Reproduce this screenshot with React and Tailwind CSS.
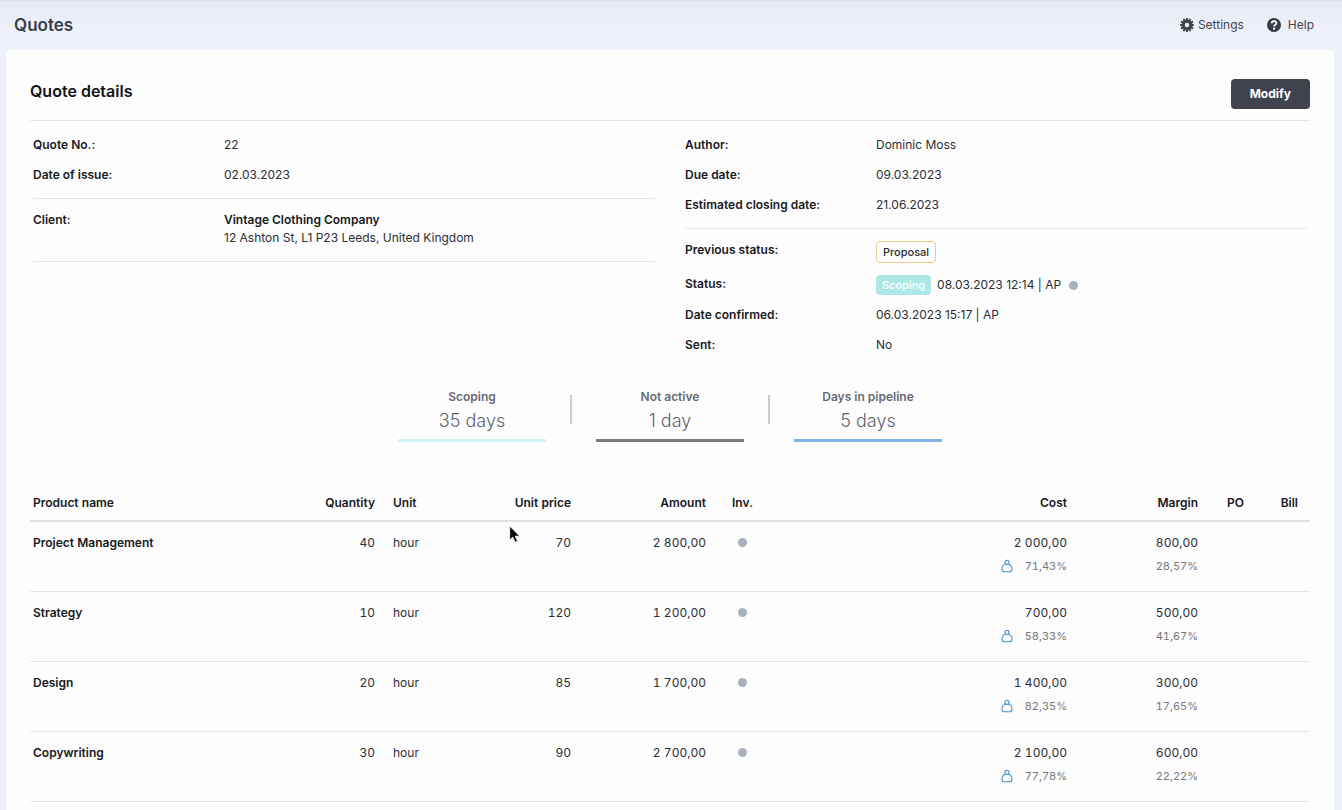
import React from "react";

const leftTop = [
  { label: "Quote No.:", value: "22" },
  { label: "Date of issue:", value: "02.03.2023" },
];

const rightTop = [
  { label: "Author:", value: "Dominic Moss" },
  { label: "Due date:", value: "09.03.2023" },
  { label: "Estimated closing date:", value: "21.06.2023" },
];

const stats = [
  { label: "Scoping", value: "35 days", line: "border-[#d2f3f3]" },
  { label: "Not active", value: "1 day", line: "border-[#7c7a80]" },
  { label: "Days in pipeline", value: "5 days", line: "border-[#80b2e6]" },
];

const products = [
  { name: "Project Management", qty: "40", price: "70", amount: "2 800,00", cost: "2 000,00", costPct: "71,43%", margin: "800,00", marginPct: "28,57%" },
  { name: "Strategy", qty: "10", price: "120", amount: "1 200,00", cost: "700,00", costPct: "58,33%", margin: "500,00", marginPct: "41,67%" },
  { name: "Design", qty: "20", price: "85", amount: "1 700,00", cost: "1 400,00", costPct: "82,35%", margin: "300,00", marginPct: "17,65%" },
  { name: "Copywriting", qty: "30", price: "90", amount: "2 700,00", cost: "2 100,00", costPct: "77,78%", margin: "600,00", marginPct: "22,22%" },
];

function GearIcon() {
  return (
    <svg viewBox="-12 -12 24 24" className="size-[14px]" aria-hidden="true">
      <g fill="#41454f">
        {[0, 30, 60, 90, 120, 150].map((a) => (
          <path key={a} d="M-2.2 -8 L-1.3 -12 H1.3 L2.2 -8 V8 L1.3 12 H-1.3 L-2.2 8 Z" transform={`rotate(${a})`} />
        ))}
        <circle r="8.8" />
      </g>
      <circle r="3.8" fill="#ecf0f8" />
    </svg>
  );
}

function HelpIcon() {
  return (
    <svg viewBox="0 0 14 14" className="size-[14px]" aria-hidden="true">
      <circle cx="7" cy="7" r="7" fill="#383c45" />
      <path d="M4.6 5.4C4.7 3.9 5.6 3.1 7 3.1s2.4.8 2.4 2.1c0 1.6-2.2 1.6-2.2 3.2" fill="none" stroke="#fff" strokeWidth="1.7" />
      <circle cx="7.1" cy="10.7" r="1.1" fill="#fff" />
    </svg>
  );
}

function PersonIcon() {
  return (
    <svg viewBox="0 0 12 14" className="h-[14px] w-[12px]" fill="none" stroke="#4793d0" strokeWidth="1.1" aria-hidden="true">
      <circle cx="6" cy="3.3" r="2.1" />
      <path d="M4.6 5.1C2.6 5.9 1 8.2 1 10.2c0 1.8 1.1 2.6 2.7 2.6h4.6c1.6 0 2.7-.8 2.7-2.6 0-2-1.6-4.3-3.6-5.1" />
    </svg>
  );
}

function Row({ label, children, className = "min-h-[30px] items-center" }) {
  return (
    <div className={`flex ${className}`}>
      <dt className="w-[191px] shrink-0 font-semibold text-[#17191e]">{label}</dt>
      <dd className="min-w-0 flex-1">{children}</dd>
    </div>
  );
}

function Dot() {
  return <span className="inline-block size-[9px] rounded-full bg-[#a9b0be]" />;
}

export default function App() {
  return (
    <div className="flex min-h-screen flex-col bg-[#ecf0f8] font-['Inter',sans-serif] text-xs leading-[18px] text-[#2b2e35]">
      <header className="flex h-[50px] items-center justify-between border-t border-[#dde0ea] bg-linear-to-b from-[#e7eaf3] to-[#edf0f8] to-50% pr-7 pb-px pl-[14px]">
        <h1 className="text-[17px] leading-6 font-semibold text-[#3a3e48]">Quotes</h1>
        <nav className="flex items-center gap-[23px] text-[#41454f]">
          <a href="#settings" className="flex items-center gap-1">
            <GearIcon />
            Settings
          </a>
          <a href="#help" className="flex items-center gap-[7px]">
            <HelpIcon />
            Help
          </a>
        </nav>
      </header>

      <main className="relative mr-2 ml-[6px] flex-1 rounded-t-[4px] bg-[#fdfdfd] px-6">
        <div className="flex h-[71px] items-center justify-between border-b border-[#e2e5ea] pt-3">
          <h2 className="text-base leading-6 font-semibold text-[#121419]">Quote details</h2>
          <button type="button" className="mt-[6px] h-[30px] rounded-[4px] bg-[#40434e] px-[19px] font-bold text-white">
            Modify
          </button>
        </div>

        <div className="grid grid-cols-2 gap-x-[30px] px-[3px] pt-[9px]">
          <div>
            <dl className="border-b border-[#e2e5ea] pb-2">
              {leftTop.map((r) => (
                <Row key={r.label} label={r.label}>{r.value}</Row>
              ))}
            </dl>
            <dl className="border-b border-[#e2e5ea] pt-3 pb-[14px]">
              <Row label="Client:" className="items-start">
                <div className="font-semibold text-[#17191e]">Vintage Clothing Company</div>
                <div>12 Ashton St, L1 P23 Leeds, United Kingdom</div>
              </Row>
            </dl>
          </div>
          <div>
            <dl className="border-b border-[#e2e5ea] pb-2">
              {rightTop.map((r) => (
                <Row key={r.label} label={r.label}>{r.value}</Row>
              ))}
            </dl>
            <dl className="pt-3">
              <Row label="Previous status:" className="h-[34px] items-start">
                <span className="inline-block rounded-[4px] border border-[#f2c48f] px-[6px] text-[11px] leading-5 font-medium text-[#2b2e35]">
                  Proposal
                </span>
              </Row>
              <Row label="Status:" className="h-[25px] items-start">
                <span className="flex items-center">
                  <span className="mr-[6px] rounded-[4px] bg-[#aee8e6] px-[6px] text-[11px] leading-5 font-medium text-white">Scoping</span>
                  <span>08.03.2023 12:14 | AP</span>
                  <span className="ml-2 flex"><Dot /></span>
                </span>
              </Row>
              <Row label="Date confirmed:">06.03.2023 15:17 | AP</Row>
              <Row label="Sent:">No</Row>
            </dl>
          </div>
        </div>

        <section className="mt-[27px] flex justify-center gap-6">
          {stats.map((s, i) => (
            <React.Fragment key={s.label}>
              {i > 0 && <div className="mt-2 h-[29px] w-[2px] bg-[#c9ccd5]" />}
              <div className={`w-[148px] border-b-3 pb-1 text-center ${s.line}`}>
                <div className="leading-5 font-semibold text-[#666a73]">{s.label}</div>
                <div className="text-lg leading-7 font-light text-[#5f626b]">{s.value}</div>
              </div>
            </React.Fragment>
          ))}
        </section>

        <table className="mt-[42px] w-full table-fixed border-collapse tabular-nums">
          <colgroup>
            <col className="w-[200px]" />
            <col className="w-[145px]" />
            <col className="w-[60px]" />
            <col className="w-[136px]" />
            <col className="w-[135px]" />
            <col className="w-[74px]" />
            <col />
            <col className="w-[131px]" />
            <col className="w-[58px]" />
            <col className="w-[54px]" />
          </colgroup>
          <thead>
            <tr className="h-[37px] border-b-2 border-[#dfe1e7] text-left text-[#17191e] *:pt-[2px] *:font-semibold">
              <th className="pl-[3px]">Product name</th>
              <th className="text-right">Quantity</th>
              <th className="pl-[18px]">Unit</th>
              <th className="text-right">Unit price</th>
              <th className="text-right">Amount</th>
              <th className="pl-[26px]">Inv.</th>
              <th className="text-right">Cost</th>
              <th className="text-right">Margin</th>
              <th className="pl-[29px]">PO</th>
              <th className="pr-3 text-right">Bill</th>
            </tr>
          </thead>
          <tbody>
            {products.map((p) => (
              <tr key={p.name} className="h-[70px] border-b border-[#e4e5e8] align-top *:pt-3">
                <td className="pl-[3px] font-semibold text-[#17191e]">{p.name}</td>
                <td className="text-right">{p.qty}</td>
                <td className="pl-[18px]">hour</td>
                <td className="text-right">{p.price}</td>
                <td className="text-right">{p.amount}</td>
                <td className="pl-8"><Dot /></td>
                <td className="text-right">
                  <div>{p.cost}</div>
                  <div className="mt-[5px] flex items-center justify-end gap-3 text-[11px] leading-[18px] text-[#757880]">
                    <PersonIcon />
                    {p.costPct}
                  </div>
                </td>
                <td className="text-right">
                  <div>{p.margin}</div>
                  <div className="mt-[5px] text-[11px] leading-[18px] text-[#757880]">{p.marginPct}</div>
                </td>
                <td />
                <td />
              </tr>
            ))}
          </tbody>
        </table>

        <svg viewBox="0 0 12 19" className="pointer-events-none absolute top-[475px] left-[503px] h-[19px] w-[12px]" aria-hidden="true">
          <path d="M.7 1v14l3.1-2.9 2.2 5.2 2.5-1.1-2.2-5h4.4z" fill="#0b0b0d" stroke="#fff" strokeWidth=".8" />
        </svg>
      </main>
    </div>
  );
}
